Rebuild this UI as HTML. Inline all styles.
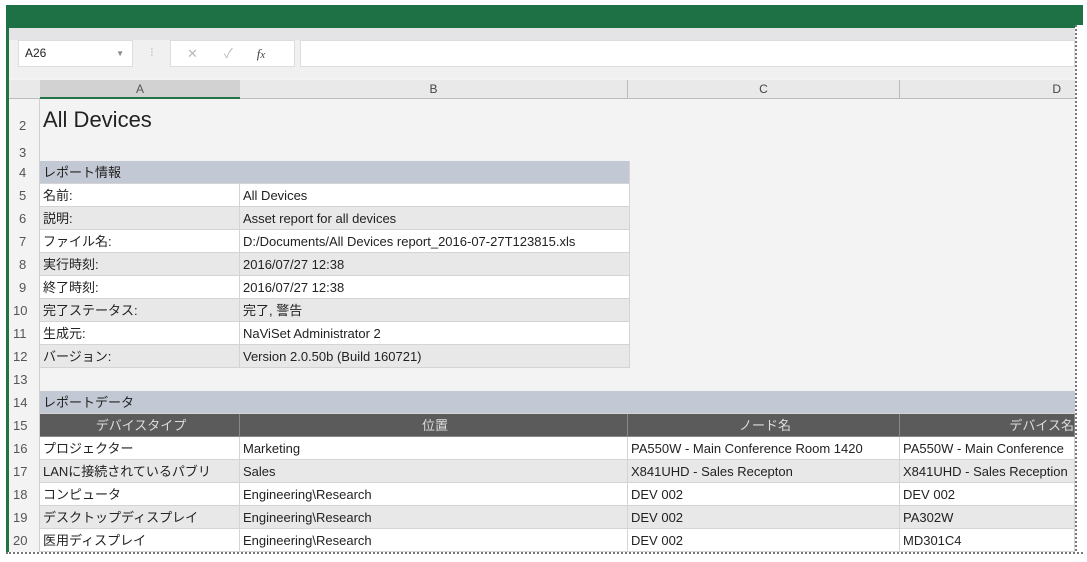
<!DOCTYPE html>
<html><head><meta charset="utf-8"><style>
*{margin:0;padding:0;box-sizing:border-box}
body{width:1087px;height:562px;background:#fff;position:relative;overflow:hidden;font-family:"Liberation Sans","Noto Sans CJK JP",sans-serif;color:#222}
.a{position:absolute}
.c{position:absolute;height:23px;line-height:23px;font-size:13px;white-space:nowrap;overflow:hidden;border-right:1px solid #d4d4d4;border-bottom:1px solid #d4d4d4;padding-left:3px}
.rn{position:absolute;left:9px;width:31px;height:23px;line-height:23px;font-size:13px;color:#555;padding-left:10px}
.w{background:#fff}.g{background:#e8e8e8}
</style></head><body>
<div class="a" style="left:6px;top:5px;width:1077px;height:548px;background:#f3f3f3;border-left:3px solid #217346"></div>
<div class="a" style="left:6px;top:5px;width:1077px;height:23px;background:#1e7145"></div>
<div class="a" style="left:9px;top:28px;width:1074px;height:12px;background:#e4e4e7"></div>
<div class="a" style="left:9px;top:40px;width:1074px;height:38px;background:#f0f0f0"></div>
<div class="a" style="left:18px;top:40px;width:115px;height:27px;background:#fff;border:1px solid #ddd;font-size:12px;line-height:25px;padding-left:6px">A26<span style="position:absolute;right:8px;font-size:8px;color:#888">▼</span></div>
<div class="a" style="left:150px;top:45px;font-size:12px;color:#bbb">⁝</div>
<div class="a" style="left:170px;top:40px;width:125px;height:27px;background:#fff;border:1px solid #ddd;font-size:13px;line-height:25px;color:#bbb"><span style="margin-left:16px">✕</span><span style="margin-left:26px">✓</span><i style="margin-left:24px;color:#444;font-family:'Liberation Serif',serif">f<small>x</small></i></div>
<div class="a" style="left:300px;top:40px;width:775px;height:27px;background:#fff;border:1px solid #ddd"></div>
<div class="a" style="left:9px;top:80px;width:1066px;height:19px;background:#e9e9e9;border-bottom:1px solid #bdbdbd"></div>
<div class="a" style="left:40px;top:80px;width:200px;height:19px;background:#d2d2d2;border-bottom:2px solid #217346;text-align:center;font-size:12px;line-height:18px;color:#555">A</div>
<div class="a" style="left:240px;top:80px;width:388px;height:19px;text-align:center;font-size:12px;line-height:18px;color:#444;border-right:1px solid #bbb">B</div>
<div class="a" style="left:628px;top:80px;width:272px;height:19px;text-align:center;font-size:12px;line-height:18px;color:#444;border-right:1px solid #bbb">C</div>
<div class="a" style="left:900px;top:80px;width:175px;height:19px;text-align:right;padding-right:14px;font-size:12px;line-height:18px;color:#444">D</div>
<div class="a" style="left:39px;top:99px;width:1px;height:453px;background:#d0d0d0"></div>
<div class="rn" style="top:114px">2</div>
<div class="a" style="left:43px;top:107px;font-size:22px">All Devices</div>
<div class="rn" style="top:141px">3</div>
<div class="rn" style="top:161px">4</div>
<div class="c" style="left:40px;top:161px;width:590px;background:#c3c9d4">レポート情報</div>
<div class="rn" style="top:184px">5</div><div class="c w" style="left:40px;top:184px;width:200px">名前:</div><div class="c w" style="left:240px;top:184px;width:390px">All Devices</div>
<div class="rn" style="top:207px">6</div><div class="c g" style="left:40px;top:207px;width:200px">説明:</div><div class="c g" style="left:240px;top:207px;width:390px">Asset report for all devices</div>
<div class="rn" style="top:230px">7</div><div class="c w" style="left:40px;top:230px;width:200px">ファイル名:</div><div class="c w" style="left:240px;top:230px;width:390px">D:/Documents/All Devices report_2016-07-27T123815.xls</div>
<div class="rn" style="top:253px">8</div><div class="c g" style="left:40px;top:253px;width:200px">実行時刻:</div><div class="c g" style="left:240px;top:253px;width:390px">2016/07/27 12:38</div>
<div class="rn" style="top:276px">9</div><div class="c w" style="left:40px;top:276px;width:200px">終了時刻:</div><div class="c w" style="left:240px;top:276px;width:390px">2016/07/27 12:38</div>
<div class="rn" style="top:299px;padding-left:4px">10</div><div class="c g" style="left:40px;top:299px;width:200px">完了ステータス:</div><div class="c g" style="left:240px;top:299px;width:390px">完了, 警告</div>
<div class="rn" style="top:322px;padding-left:4px">11</div><div class="c w" style="left:40px;top:322px;width:200px">生成元:</div><div class="c w" style="left:240px;top:322px;width:390px">NaViSet Administrator 2</div>
<div class="rn" style="top:345px;padding-left:4px">12</div><div class="c g" style="left:40px;top:345px;width:200px">バージョン:</div><div class="c g" style="left:240px;top:345px;width:390px">Version 2.0.50b (Build 160721)</div>
<div class="rn" style="top:368px;padding-left:4px">13</div>
<div class="rn" style="top:391px;padding-left:4px">14</div>
<div class="c" style="left:40px;top:391px;width:1035px;background:#c3c9d4;border-right:0">レポートデータ</div>
<div class="rn" style="top:414px;padding-left:4px">15</div>
<div class="c" style="left:40px;top:414px;width:200px;background:#5b5b5b;color:#ddd;text-align:center;border-color:#888">デバイスタイプ</div>
<div class="c" style="left:240px;top:414px;width:388px;background:#5b5b5b;color:#ddd;text-align:center;border-color:#888">位置</div>
<div class="c" style="left:628px;top:414px;width:272px;background:#5b5b5b;color:#ddd;text-align:center;border-color:#888">ノード名</div>
<div class="c" style="left:900px;top:414px;width:175px;background:#5b5b5b;color:#ddd;text-align:right;border-color:#888">デバイス名</div>
<div class="rn" style="top:437px;padding-left:4px">16</div>
<div class="c w" style="left:40px;top:437px;width:200px">プロジェクター</div><div class="c w" style="left:240px;top:437px;width:388px">Marketing</div><div class="c w" style="left:628px;top:437px;width:272px">PA550W - Main Conference Room 1420</div><div class="c w" style="left:900px;top:437px;width:175px">PA550W - Main Conference</div>
<div class="rn" style="top:460px;padding-left:4px">17</div>
<div class="c g" style="left:40px;top:460px;width:200px">LANに接続されているパブリ</div><div class="c g" style="left:240px;top:460px;width:388px">Sales</div><div class="c g" style="left:628px;top:460px;width:272px">X841UHD - Sales Recepton</div><div class="c g" style="left:900px;top:460px;width:175px">X841UHD - Sales Reception</div>
<div class="rn" style="top:483px;padding-left:4px">18</div>
<div class="c w" style="left:40px;top:483px;width:200px">コンピュータ</div><div class="c w" style="left:240px;top:483px;width:388px">Engineering\Research</div><div class="c w" style="left:628px;top:483px;width:272px">DEV 002</div><div class="c w" style="left:900px;top:483px;width:175px">DEV 002</div>
<div class="rn" style="top:506px;padding-left:4px">19</div>
<div class="c g" style="left:40px;top:506px;width:200px">デスクトップディスプレイ</div><div class="c g" style="left:240px;top:506px;width:388px">Engineering\Research</div><div class="c g" style="left:628px;top:506px;width:272px">DEV 002</div><div class="c g" style="left:900px;top:506px;width:175px">PA302W</div>
<div class="rn" style="top:529px;padding-left:4px">20</div>
<div class="c w" style="left:40px;top:529px;width:200px">医用ディスプレイ</div><div class="c w" style="left:240px;top:529px;width:388px">Engineering\Research</div><div class="c w" style="left:628px;top:529px;width:272px">DEV 002</div><div class="c w" style="left:900px;top:529px;width:175px">MD301C4</div>
<div class="a" style="left:1075px;top:25px;width:8px;height:530px;border-left:2px dotted #777;background:#fff"></div>
<div class="a" style="left:6px;top:552px;width:1077px;height:10px;border-top:2px dotted #777;background:#fff"></div>
</body></html>
